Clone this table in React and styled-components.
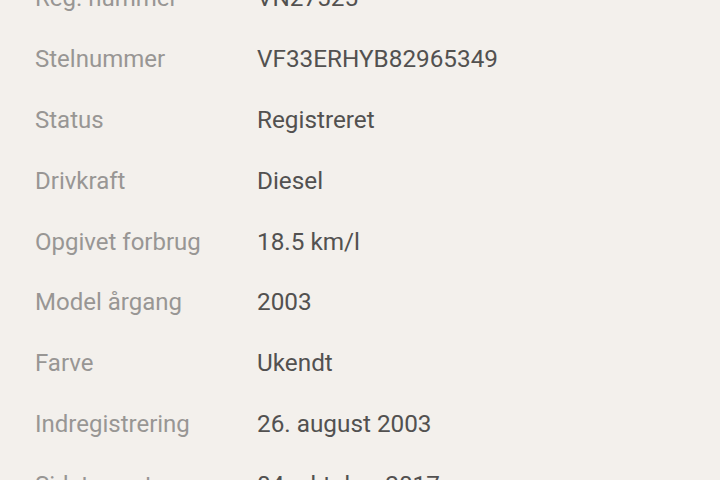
import React from "react";
import styled, { createGlobalStyle } from "styled-components";

const GlobalStyle = createGlobalStyle`
  html, body {
    margin: 0;
    padding: 0;
    background: #f3f0ec;
    overflow: hidden;
  }
  body {
    font-family: Roboto, "Liberation Sans", sans-serif;
  }
`;

const rows = [
  ["Reg. nummer", "VN27525"],
  ["Stelnummer", "VF33ERHYB82965349"],
  ["Status", "Registreret"],
  ["Drivkraft", "Diesel"],
  ["Opgivet forbrug", "18.5 km/l"],
  ["Model årgang", "2003"],
  ["Farve", "Ukendt"],
  ["Indregistrering", "26. august 2003"],
  ["Sidst synet", "04. oktober 2017"],
];

export default function App() {
  return (
    <>
      <GlobalStyle />
      <Page>
        <List>
          {rows.map(([label, value]) => (
            <Row key={label}>
              <Label>{label}</Label>
              <Value>{value}</Value>
            </Row>
          ))}
        </List>
      </Page>
    </>
  );
}

const Page = styled.div`
  width: 720px;
  height: 480px;
  overflow: hidden;
  background: #f3f0ec;
`;

const List = styled.div`
  display: flex;
  flex-direction: column;
  margin-top: -32px;
  padding-left: 35px;
`;

const Row = styled.div`
  display: grid;
  grid-template-columns: 222px 1fr;
  align-items: center;
  height: 60.8px;
  line-height: 28px;
`;

const Label = styled.span`
  font-size: 24px;
  color: #989694;
`;

const Value = styled.span`
  font-size: 24.3px;
  color: #525150;
`;
